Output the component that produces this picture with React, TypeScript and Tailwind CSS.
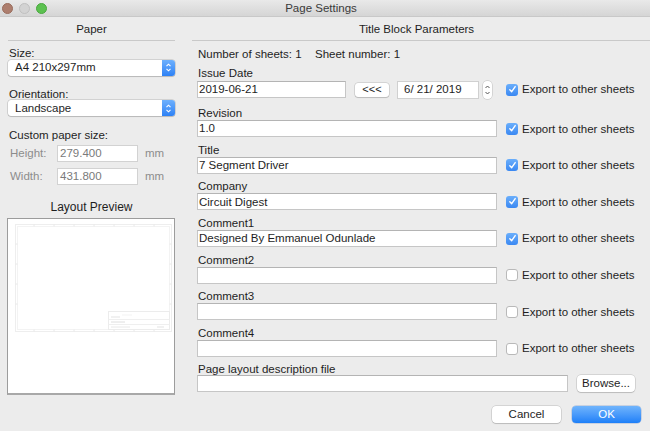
import React from "react";

function Stepper() {
  return (
    <div className="w-[13px] rounded-r-[3px] bg-gradient-to-b from-[#6db0fd] to-[#2d81f5] flex items-center justify-center">
      <svg width="7" height={11} viewBox="0 0 7 11">
        <path d="M1.5 4.2 L3.5 2.2 L5.5 4.2 M1.5 6.8 L3.5 8.8 L5.5 6.8" stroke="white" fill="none" strokeWidth="1.1" />
      </svg>
    </div>
  );
}

function Select({ value }: { value: string }) {
  return (
    <div className="h-[16px] w-full flex items-stretch rounded-[3px] bg-white shadow-[0_0_0_0.5px_rgba(0,0,0,0.22),0_1px_1px_rgba(0,0,0,0.12)]">
      <div className="flex-1 pl-[7px] pt-[1px] flex items-center leading-none">{value}</div>
      <Stepper />
    </div>
  );
}

function Check({ checked }: { checked: boolean }) {
  if (checked) {
    return (
      <div className="w-[12px] h-[12px] rounded-[3px] bg-gradient-to-b from-[#6aaefb] to-[#3a88f2] flex items-center justify-center shrink-0">
        <svg width="9" height="9" viewBox="0 0 9 9">
          <path d="M1.8 4.8 L3.7 6.7 L7.2 1.6" stroke="white" strokeWidth="1.4" fill="none" strokeLinecap="round" strokeLinejoin="round" />
        </svg>
      </div>
    );
  }
  return <div className="w-[12px] h-[12px] rounded-[3px] bg-white border border-[#b9b9b9] shrink-0" />;
}

function Field({ value, w }: { value?: string; w: string }) {
  return (
    <div className={`${w} h-[17px] bg-white border border-[#c6c6c6] border-t-[#b4b4b4] px-[1px] pt-[1px] flex items-center leading-none shrink-0`}>
      {value}
    </div>
  );
}

function Export({ checked }: { checked: boolean }) {
  return (
    <div className="flex items-center ml-[9px]">
      <Check checked={checked} />
      <span className="ml-[4px] pt-[1px] whitespace-nowrap">Export to other sheets</span>
    </div>
  );
}

function Group({ label, value, checked }: { label: string; value?: string; checked: boolean }) {
  return (
    <div className="h-[36.67px] flex flex-col">
      <div className="h-[15px] leading-[15px] pt-[1.5px] pl-[1px]">{label}</div>
      <div className="flex items-center">
        <Field value={value} w="w-[300px]" />
        <Export checked={checked} />
      </div>
    </div>
  );
}

function Button({ children, w }: { children: React.ReactNode; w: string }) {
  return (
    <div className={`${w} h-[17px] rounded-[4px] bg-white pt-[1px] shadow-[0_0_0_0.5px_rgba(0,0,0,0.2),0_1px_1px_rgba(0,0,0,0.12)] flex items-center justify-center leading-none`}>
      {children}
    </div>
  );
}

function Preview() {
  const ticksX = [26, 46, 66, 86, 106, 126, 146];
  const ticksY = [25, 45, 65, 85];
  return (
    <svg width="166" height="175" viewBox="0 0 166 175">
      <rect x="7.5" y="5.5" width="156" height="107" fill="none" stroke="#eeeeee" strokeWidth="1" />
      <rect x="9.5" y="7.5" width="152" height="103" fill="none" stroke="#f3f3f3" strokeWidth="1" />
      {ticksX.map((x) => (
        <g key={x}>
          <line x1={x} y1="5.5" x2={x} y2="7.5" stroke="#e8e8e8" />
          <line x1={x} y1="110.5" x2={x} y2="112.5" stroke="#e8e8e8" />
        </g>
      ))}
      {ticksY.map((y) => (
        <g key={y}>
          <line x1="7.5" y1={y} x2="9.5" y2={y} stroke="#e8e8e8" />
          <line x1="161.5" y1={y} x2="163.5" y2={y} stroke="#e8e8e8" />
        </g>
      ))}
      <rect x="100.5" y="92.5" width="61" height="18" fill="none" stroke="#ececec" />
      <line x1="100.5" y1="100.5" x2="161.5" y2="100.5" stroke="#efefef" />
      <line x1="100.5" y1="105.5" x2="161.5" y2="105.5" stroke="#efefef" />
      <line x1="103" y1="98" x2="112" y2="98" stroke="#dcdcdc" strokeWidth="0.8" />
      <line x1="103" y1="103" x2="117" y2="103" stroke="#d6d6d6" strokeWidth="0.8" />
      <line x1="103" y1="108" x2="122" y2="108" stroke="#e2e2e2" strokeWidth="0.8" />
      <line x1="149" y1="108" x2="156" y2="108" stroke="#dcdcdc" strokeWidth="0.8" />
      <line x1="114" y1="96" x2="124" y2="96" stroke="#f0f0f0" strokeWidth="0.8" />
    </svg>
  );
}

export default function App() {
  return (
    <div className="w-[650px] h-[431px] overflow-hidden bg-[#ececec] flex flex-col text-[11.5px] text-[#1e1e1e] font-['Liberation_Sans',Arial,sans-serif]">
      {/* Title bar */}
      <div className="h-[17px] relative flex items-center bg-gradient-to-b from-[#e9e9e9] to-[#d5d5d5] border-b border-[#c8c8c8] shrink-0">
        <div className="flex items-center gap-[6px] pl-[2px]">
          <div className="w-[11px] h-[11px] rounded-full bg-[#ad7e6e] border border-[#9a6c5c]" />
          <div className="w-[11px] h-[11px] rounded-full bg-[#d3d3d3] border border-[#c0c0c0]" />
          <div className="w-[11px] h-[11px] rounded-full bg-[#5cc150] border border-[#4aa83f]" />
        </div>
        <div className="absolute inset-0 flex items-center justify-center pr-[8px] pt-[2px] text-[#3a3a3a]">Page Settings</div>
      </div>

      <div className="flex flex-1">
        {/* Left column */}
        <div className="w-[192px] pl-[8px] pr-[17px] flex flex-col shrink-0">
          <div className="h-[23px] pt-[2px] flex items-center justify-center">Paper</div>
          <div className="h-px bg-[#c9c9c9]" />
          <div className="mt-[3.5px] h-[15px] leading-[15px] pt-[1.5px] pl-[1px]">Size:</div>
          <Select value="A4 210x297mm" />
          <div className="mt-[9.5px] h-[15px] leading-[15px] pt-[1.5px] pl-[1px]">Orientation:</div>
          <Select value="Landscape" />
          <div className="mt-[10.5px] h-[15px] leading-[15px] pt-[1.5px] pl-[1px]">Custom paper size:</div>
          <div className="mt-[3.5px] h-[17px] flex items-center">
            <div className="w-[49px] pl-[2px] pt-[1px] text-[#8c8c8c]">Height:</div>
            <div className="w-[81px] h-[17px] bg-white border border-[#d2d2d2] pl-[2px] pt-[1px] flex items-center text-[#7a7a7a] leading-none">279.400</div>
            <div className="ml-[7px] pt-[1px] text-[#8c8c8c]">mm</div>
          </div>
          <div className="mt-[6px] h-[17px] flex items-center">
            <div className="w-[49px] pl-[2px] pt-[1px] text-[#8c8c8c]">Width:</div>
            <div className="w-[81px] h-[17px] bg-white border border-[#d2d2d2] pl-[2px] pt-[1px] flex items-center text-[#7a7a7a] leading-none">431.800</div>
            <div className="ml-[7px] pt-[1px] text-[#8c8c8c]">mm</div>
          </div>
          <div className="mt-[13px] h-[15px] leading-[15px] pt-[1.5px] text-center text-[12px]">Layout Preview</div>
          <div className="mt-[4.5px] -ml-[1px] h-[177px] bg-white border border-[#9c9c9c] border-b-2 border-b-[#a8a8a8]">
            <Preview />
          </div>
        </div>

        {/* Right column */}
        <div className="flex-1 flex flex-col">
          <div className="h-[23px] pt-[2px] flex items-center justify-center pr-[9px]">Title Block Parameters</div>
          <div className="h-px bg-[#c9c9c9]" />
          <div className="pl-[5px] flex flex-col">
            <div className="mt-[4.5px] h-[15px] leading-[15px] pt-[1.5px] flex pl-[1px]">
              <span className="w-[117px]">Number of sheets: 1</span>
              <span>Sheet number: 1</span>
            </div>
            <div className="mt-[4px] h-[15px] leading-[15px] pt-[1.5px] pl-[1px]">Issue Date</div>
            <div className="h-[20px] flex items-center">
              <Field value="2019-06-21" w="w-[149px]" />
              <div className="ml-[9px] w-[34px] h-[14px] rounded-[3px] bg-white shadow-[0_0_0_0.5px_rgba(0,0,0,0.2),0_1px_1px_rgba(0,0,0,0.12)] flex items-center justify-center leading-none text-[11px]">&lt;&lt;&lt;</div>
              <div className="ml-[8px] w-[82px] h-[18px] bg-white border border-[#d0d0d0] flex items-center pl-[6px] pt-[1px] leading-none">6/ 21/ 2019</div>
              <div className="ml-[4px] w-[9px] h-[18px] rounded-[4px] bg-white shadow-[0_0_0_0.5px_rgba(0,0,0,0.2)] flex items-center justify-center">
                <svg width="7" height="14" viewBox="0 0 7 14">
                  <path d="M1.5 5 L3.5 3 L5.5 5 M1.5 9 L3.5 11 L5.5 9" stroke="#555" fill="none" strokeWidth="1" />
                </svg>
              </div>
              <div className="ml-[5px]">
                <Export checked={true} />
              </div>
            </div>
            <div className="mt-[5px]">
              <Group label="Revision" value="1.0" checked={true} />
              <Group label="Title" value="7 Segment Driver" checked={true} />
              <Group label="Company" value="Circuit Digest" checked={true} />
              <Group label="Comment1" value="Designed By Emmanuel Odunlade" checked={true} />
              <Group label="Comment2" checked={false} />
              <Group label="Comment3" checked={false} />
              <Group label="Comment4" checked={false} />
            </div>
            <div className="h-[14px] leading-[14px] pt-[1px] pl-[1px]">Page layout description file</div>
            <div className="flex items-center">
              <Field w="w-[371px]" />
              <div className="ml-[9px]">
                <Button w="w-[58px]">Browse...</Button>
              </div>
            </div>
            <div className="mt-[13.5px] flex justify-end pr-[9px] gap-[11px]">
              <Button w="w-[69px]">Cancel</Button>
              <div className="w-[69px] h-[17px] rounded-[4px] pt-[1px] bg-gradient-to-b from-[#6fb4fc] to-[#1b7ff8] text-white flex items-center justify-center leading-none shadow-[0_0_0_0.5px_rgba(0,60,160,0.3)]">OK</div>
            </div>
          </div>
        </div>
      </div>
    </div>
  );
}
